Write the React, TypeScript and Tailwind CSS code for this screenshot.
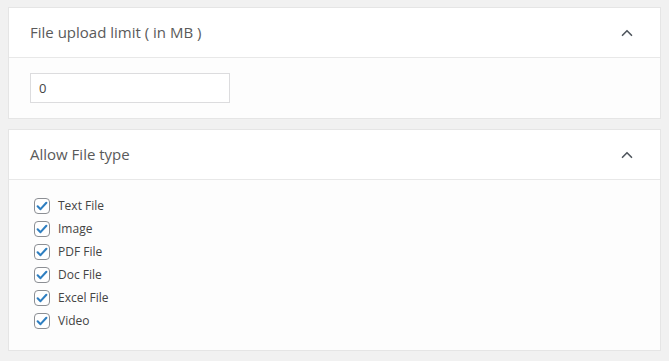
import { ChevronUp } from "lucide-react";

const fileTypes = ["Text File", "Image", "PDF File", "Doc File", "Excel File", "Video"];

const Check = () => (
    <span className="flex h-[16px] w-[16px] items-center justify-center rounded-[4px] border border-[#8c8f94] bg-white">
        <svg viewBox="0 0 16 16" className="h-[14px] w-[14px]">
            <path d="M3 8.3 L6.3 11.6 L13 4.3" fill="none" stroke="#2f7fc1" strokeWidth="2.4" strokeLinecap="round" strokeLinejoin="round" />
        </svg>
    </span>
);

const PanelHeader = ({ title }: { title: string }) => (
    <div className="flex h-[50px] items-center justify-between border-b border-[#e8e8e8] bg-white pl-[21px] pr-[24px]">
        <span className="text-[15px] text-[#5a5a5a]">{title}</span>
        <ChevronUp size={18} strokeWidth={2.2} className="text-[#50575e]" />
    </div>
);

const App = () => {
    return (
        <div className="min-h-[361px] bg-[#f1f1f1] px-2 pt-[7px] font-['Open_Sans',sans-serif]">
            {/* Upload limit */}
            <div className="border border-[#e5e5e5] bg-white">
                <PanelHeader title="File upload limit ( in MB )" />
                <div className="bg-[#fdfdfd] px-[21px] py-[15px]">
                    <input
                        type="text"
                        defaultValue="0"
                        className="h-[30px] w-[200px] border border-[#dcdcde] bg-white px-[8px] text-[13px] text-[#444] outline-none"
                    />
                </div>
            </div>

            {/* Allowed types */}
            <div className="mt-[10px] border border-[#e5e5e5] bg-white">
                <PanelHeader title="Allow File type" />
                <div className="flex flex-col gap-[7px] bg-[#fdfdfd] pb-[21px] pl-[25px] pt-[18px]">
                    {fileTypes.map((t) => (
                        <label key={t} className="flex h-[16px] items-center gap-[8px] text-[12px] text-[#444]">
                            <Check />
                            {t}
                        </label>
                    ))}
                </div>
            </div>
        </div>
    );
};

export default App;
